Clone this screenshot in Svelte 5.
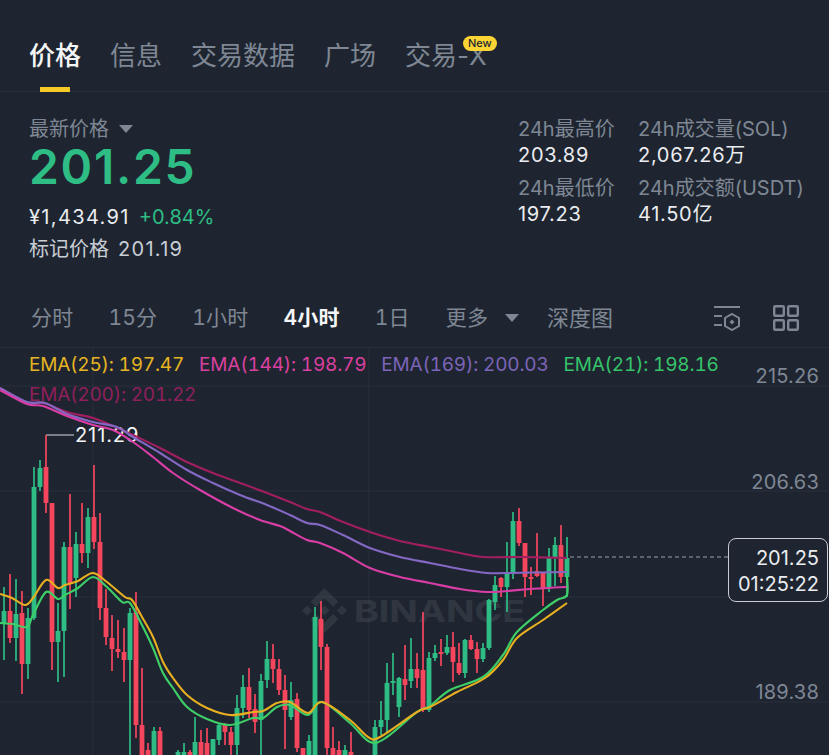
<script lang="ts">
	const tabs = ['价格', '信息', '交易数据', '广场', '交易-X'];
	const intervals = ['分时', '15分', '1小时', '4小时', '1日'];

	const legend = [
		{ text: 'EMA(25): 197.47', color: '#e6b422' },
		{ text: 'EMA(144): 198.79', color: '#d9409f' },
		{ text: 'EMA(169): 200.03', color: '#7c64b8' },
		{ text: 'EMA(21): 198.16', color: '#35c46a' },
		{ text: 'EMA(200): 201.22', color: '#8f1f5c' }
	];

	const axis = [
		{ text: '215.26', y: 375 },
		{ text: '206.63', y: 481 },
		{ text: '189.38', y: 691 }
	];

	const gridY = [386, 491, 597, 702];
	const gridX = [93, 369];

	// x, high, body top, body bottom, low, up?
	type Candle = [number, number, number, number, number, boolean];
	const B = 760;
	const candles: Candle[] = [
		[4, 587, 611, 623, 660, true],
		[10, 574, 611, 638, 643, false],
		[16, 579, 614, 638, 661, true],
		[22, 591, 613, 664, 694, false],
		[28, 608, 618, 664, 679, true],
		[34, 467, 487, 618, 620, true],
		[40, 460, 468, 487, 491, true],
		[46, 435, 467, 503, 513, false],
		[52, 503, 503, 642, 670, false],
		[58, 603, 631, 642, 682, true],
		[64, 542, 547, 631, 677, true],
		[70, 494, 547, 583, 609, false],
		[76, 532, 544, 578, 597, true],
		[82, 503, 544, 553, 563, false],
		[88, 508, 517, 553, 568, true],
		[94, 465, 517, 542, 549, false],
		[100, 513, 542, 608, 620, false],
		[106, 589, 608, 637, 645, false],
		[112, 615, 638, 649, 671, false],
		[118, 620, 649, 652, 658, false],
		[124, 628, 652, 660, 682, false],
		[130, 608, 613, 660, B, true],
		[136, 592, 612, 725, 738, false],
		[142, 668, 725, B, B, false],
		[148, 743, 750, B, B, false],
		[154, 727, 731, B, B, true],
		[160, 727, 731, B, B, false],
		[178, 750, 752, B, B, true],
		[184, 743, 752, B, B, true],
		[190, 750, 752, B, B, false],
		[195, 717, 742, B, B, true],
		[201, 730, 742, B, B, false],
		[207, 728, 743, B, B, false],
		[213, 739, 739, B, B, true],
		[219, 723, 725, 740, 745, true],
		[225, 723, 725, 732, 745, false],
		[231, 727, 732, 745, B, false],
		[237, 695, 708, 745, B, true],
		[243, 675, 687, 708, 718, true],
		[249, 668, 687, 710, 718, false],
		[255, 694, 709, 722, 733, false],
		[261, 674, 681, 720, B, true],
		[267, 641, 659, 680, 688, true],
		[273, 644, 659, 669, 683, false],
		[279, 659, 669, 690, 695, false],
		[285, 675, 690, 710, 749, false],
		[291, 682, 700, 717, 720, true],
		[297, 693, 699, 748, 752, false],
		[303, 748, 748, B, B, false],
		[309, 735, 741, B, B, true],
		[315, 607, 617, B, B, true],
		[321, 601, 619, 647, 670, false],
		[327, 644, 647, 748, B, false],
		[333, 727, 748, B, B, false],
		[339, 741, 750, B, B, false],
		[345, 745, 750, B, B, true],
		[351, 732, 752, B, B, false],
		[375, 720, 727, B, B, true],
		[381, 701, 720, 727, 735, true],
		[387, 663, 683, 720, 733, true],
		[393, 653, 681, 683, 695, true],
		[399, 677, 678, 707, 717, true],
		[405, 645, 679, 685, 700, false],
		[411, 638, 669, 681, 688, true],
		[417, 653, 669, 678, 688, false],
		[423, 612, 670, 710, 712, false],
		[429, 652, 658, 710, 712, true],
		[435, 645, 653, 658, 661, true],
		[441, 639, 652, 654, 666, false],
		[447, 635, 647, 653, 655, true],
		[453, 632, 647, 662, 682, false],
		[459, 643, 663, 673, 675, false],
		[465, 639, 640, 673, 678, true],
		[471, 635, 640, 649, 650, false],
		[477, 642, 649, 659, 673, false],
		[483, 643, 648, 659, 662, true],
		[489, 599, 600, 648, 650, true],
		[495, 576, 585, 602, 610, true],
		[501, 577, 578, 587, 597, false],
		[507, 542, 574, 587, 612, true],
		[513, 512, 521, 574, 579, true],
		[519, 508, 521, 543, 546, false],
		[525, 543, 543, 577, 597, false],
		[531, 567, 577, 579, 595, false],
		[537, 533, 571, 576, 577, false],
		[543, 572, 572, 588, 606, false],
		[549, 548, 558, 588, 592, true],
		[555, 537, 545, 558, 586, true],
		[561, 525, 545, 577, 583, false],
		[567, 537, 558, 577, 597, true]
	];

	const ema200 = [[0,388],[27,403],[43,403],[67,412],[93,418],[113,426],[133,435],[160,448],[187,462],[213,473],[240,483],[267,493],[290,502],[307,509],[320,512],[343,522],[370,532],[400,541],[430,547],[460,553],[483,557],[523,557],[567,558]];
	const ema169 = [[0,388],[27,402],[45,403],[67,414],[93,422],[117,427],[133,437],[160,453],[187,470],[213,483],[240,495],[267,505],[290,515],[307,523],[320,525],[343,535],[370,548],[400,557],[430,563],[460,569],[487,573],[507,573],[567,572]];
	const ema144 = [[0,390],[27,404],[43,406],[67,416],[93,425],[113,430],[133,442],[153,457],[173,473],[200,490],[233,508],[260,520],[280,526],[290,531],[307,540],[320,543],[343,553],[370,568],[400,577],[430,583],[460,589],[487,592],[507,591],[530,589],[567,587]];
	const ema25 = [[0,594],[12,598],[25,605],[33,598],[46,580],[58,588],[65,585],[78,581],[93,573],[107,582],[125,597],[132,600],[142,617],[153,637],[163,662],[173,678],[187,695],[207,708],[230,715],[253,712],[263,711],[277,703],[290,702],[308,713],[322,702],[350,720],[368,737],[380,737],[417,712],[430,707],[457,692],[485,678],[503,660],[517,638],[543,620],[567,603]];
	const ema21 = [[0,623],[13,624],[27,627],[33,615],[46,592],[58,599],[65,595],[78,588],[93,577],[107,587],[122,602],[130,603],[142,625],[153,648],[163,673],[173,688],[187,707],[207,719],[230,725],[253,718],[263,718],[277,707],[290,705],[308,715],[322,702],[350,723],[370,742],[387,737],[417,712],[430,706],[450,690],[483,677],[503,655],[517,632],[543,610],[557,600],[567,595],[567,576]];

	const lines = [
		{ pts: ema200, color: '#a11e60' },
		{ pts: ema169, color: '#8468c4' },
		{ pts: ema144, color: '#d93ea6' },
		{ pts: ema21, color: '#3ecf68' },
		{ pts: ema25, color: '#e8b021' }
	];

	function smooth(pts: number[][]): string {
		let d = `M${pts[0][0]} ${pts[0][1]}`;
		for (let i = 0; i < pts.length - 1; i++) {
			const p0 = pts[i - 1] ?? pts[i];
			const p1 = pts[i];
			const p2 = pts[i + 1];
			const p3 = pts[i + 2] ?? p2;
			const c1x = p1[0] + (p2[0] - p0[0]) / 6;
			const c1y = p1[1] + (p2[1] - p0[1]) / 6;
			const c2x = p2[0] - (p3[0] - p1[0]) / 6;
			const c2y = p2[1] - (p3[1] - p1[1]) / 6;
			d += `C${c1x.toFixed(1)} ${c1y.toFixed(1)} ${c2x.toFixed(1)} ${c2y.toFixed(1)} ${p2[0]} ${p2[1]}`;
		}
		return d;
	}
</script>

<div class="page">
	<nav class="tabs">
		{#each tabs as tab, i}
			<div class="tab" class:active={i === 0}>
				{tab}
				{#if i === tabs.length - 1}<span class="badge">New</span>{/if}
			</div>
		{/each}
	</nav>

	<section class="quote">
		<div class="main">
			<div class="label">最新价格<span class="caret"></span></div>
			<div class="price">201.25</div>
			<div class="sub"><span class="cny">¥1,434.91</span><span class="pct">+0.84%</span></div>
			<div class="mark"><span>标记价格</span><span class="mark-v">201.19</span></div>
		</div>
		<div class="stats">
			<div><div class="stat-k">24h最高价</div><div class="stat-v">203.89</div></div>
			<div><div class="stat-k">24h成交量(SOL)</div><div class="stat-v">2,067.26万</div></div>
			<div><div class="stat-k">24h最低价</div><div class="stat-v">197.23</div></div>
			<div><div class="stat-k">24h成交额(USDT)</div><div class="stat-v">41.50亿</div></div>
		</div>
	</section>

	<div class="toolbar">
		{#each intervals as it}
			<span class="interval" class:current={it === '4小时'}>{it}</span>
		{/each}
		<span class="interval more">更多<span class="caret"></span></span>
		<span class="interval depth">深度图</span>
		<div class="tools">
			<svg width="28" height="26" viewBox="0 0 28 26" fill="none" stroke="#7f8794" stroke-width="2">
				<path d="M1 2H27M1 11H9M1 20H9" />
				<path d="M19 9L26 13V21L19 25L12 21V13Z" />
				<path d="M19 14.5L21.5 17L19 19.5L16.5 17Z" fill="#7f8794" stroke="none" />
			</svg>
			<svg width="26" height="26" viewBox="0 0 26 26" fill="none" stroke="#7f8794" stroke-width="2.4">
				<rect x="1.2" y="1.2" width="9.6" height="9.6" rx="1" />
				<rect x="15.2" y="1.2" width="9.6" height="9.6" rx="1" />
				<rect x="1.2" y="15.2" width="9.6" height="9.6" rx="1" />
				<rect x="15.2" y="15.2" width="9.6" height="9.6" rx="1" />
			</svg>
		</div>
	</div>

	<div class="chart">
		<svg class="plot" width="829" height="408" viewBox="0 347 829 408">
			{#each gridY as y}
				<line x1="0" x2="829" y1={y} y2={y} stroke="#2a303b" stroke-width="1" />
			{/each}
			{#each gridX as x}
				<line x1={x} x2={x} y1="347" y2="755" stroke="#2a303b" stroke-width="1" />
			{/each}

			<g opacity="0.08" fill="#fff">
				<path
					transform="translate(302 588) scale(1.875)"
					d="M16.624 13.9202l2.7175 2.7154-7.353 7.353-7.353-7.352 2.7175-2.7164 4.6355 4.6595 4.6356-4.6595zm4.6366-4.6366L24 12l-2.7154 2.7164L18.5682 12l2.6924-2.7164zm-9.272.001l2.7163 2.6914-2.7164 2.7174v-.001L9.2721 12l2.7164-2.7154zm-9.2722-.001L5.4088 12l-2.6914 2.6924L0 12l2.7164-2.7164zM11.9885.0115l7.353 7.329-2.7174 2.7154-4.6356-4.6356-4.6355 4.6595-2.7174-2.7154 7.353-7.353z"
				/>
				<text class="wm" x="354" y="622" textLength="171" lengthAdjust="spacingAndGlyphs">BINANCE</text>
			</g>

			<line x1="46" x2="74" y1="435" y2="435" stroke="#d8dbe0" stroke-width="1" />
			<text class="high" x="75" y="442">211.29</text>

			{#each candles as [x, high, top, bottom, low, up]}
				<line x1={x} x2={x} y1={high} y2={low} stroke={up ? '#2ebd85' : '#f6465d'} stroke-width="1.7" />
				<rect x={x - 2.4} y={top} width="4.8" height={Math.max(bottom - top, 1.5)} fill={up ? '#2ebd85' : '#f6465d'} />
			{/each}

			{#each lines as l}
				<path d={smooth(l.pts)} fill="none" stroke={l.color} stroke-width="2.1" stroke-linejoin="round" />
			{/each}

			<line x1="570" x2="728" y1="557" y2="557" stroke="#9aa0a8" stroke-width="1" stroke-dasharray="4 3" />
		</svg>

		<div class="legend">
			{#each legend as item}
				<span style="color: {item.color}">{item.text}</span>
			{/each}
		</div>

		{#each axis as a}
			<span class="axis" style="top: {a.y - 347 - 12}px">{a.text}</span>
		{/each}

		<div class="last">
			<div>201.25</div>
			<div>01:25:22</div>
		</div>
	</div>
</div>

<style>
	:global(body) {
		margin: 0;
		background: #1e2530;
	}

	.page {
		width: 829px;
		height: 755px;
		overflow: hidden;
		background: #1e2530;
		color: #eaecef;
		font-family: Inter, 'Noto Sans CJK SC', sans-serif;
	}

	.tabs {
		display: flex;
		gap: 29px;
		height: 91px;
		padding: 0 29px;
		border-bottom: 1px solid #2a303b;
		box-sizing: content-box;
	}

	.tab {
		position: relative;
		font-size: 26px;
		line-height: 36px;
		padding-top: 38px;
		color: #7f8794;
		white-space: nowrap;
	}

	.tab.active {
		color: #f4f5f6;
		font-weight: 500;
	}

	.tab.active::after {
		content: '';
		position: absolute;
		left: 11px;
		right: 11px;
		bottom: -1px;
		height: 5px;
		background: #f5c926;
	}

	.badge {
		position: absolute;
		right: -10px;
		top: 36px;
		width: 34px;
		height: 15px;
		border-radius: 8px;
		background: #fcd535;
		color: #1e2530;
		font-size: 11px;
		line-height: 15px;
		text-align: center;
		font-weight: 500;
	}

	.quote {
		display: flex;
		justify-content: space-between;
		padding: 24px 0 0 29px;
		height: 146px;
	}

	.label {
		display: flex;
		align-items: center;
		font-size: 20px;
		line-height: 26px;
		color: #7f8794;
	}

	.caret {
		display: inline-block;
		width: 0;
		height: 0;
		margin-left: 10px;
		border-left: 7px solid transparent;
		border-right: 7px solid transparent;
		border-top: 8px solid #7f8794;
	}

	.price {
		font-size: 48px;
		font-weight: 600;
		line-height: 50px;
		letter-spacing: 1.7px;
		color: #2ebd85;
	}

	.sub {
		display: flex;
		gap: 9px;
		margin-top: 12px;
		font-size: 20px;
		line-height: 26px;
	}

	.cny {
		letter-spacing: 1.35px;
	}

	.pct {
		color: #2ebd85;
	}

	.mark {
		display: flex;
		gap: 9px;
		margin-top: 6px;
		font-size: 20px;
		line-height: 26px;
		color: #c9ced6;
	}

	.mark-v {
		letter-spacing: 1.3px;
	}

	.stats {
		display: grid;
		grid-template-columns: 120px 191px;
		row-gap: 7px;
		align-content: start;
	}

	.stat-k {
		font-size: 20px;
		line-height: 26px;
		color: #7f8794;
		white-space: nowrap;
	}

	.stat-v {
		font-size: 20px;
		line-height: 26px;
		letter-spacing: 0.7px;
		color: #eaecef;
		white-space: nowrap;
	}

	.toolbar {
		display: flex;
		align-items: center;
		gap: 35px;
		height: 40px;
		margin-top: 36px;
		margin-bottom: 9px;
		padding-left: 31px;
	}

	.interval {
		font-size: 21px;
		line-height: 40px;
		letter-spacing: 0.2px;
		font-variant-numeric: tabular-nums;
		color: #7f8794;
		white-space: nowrap;
	}

	.interval.current {
		color: #f4f5f6;
		font-weight: 600;
	}

	.more {
		display: inline-flex;
		align-items: center;
		margin-left: 1px;
	}

	.more .caret {
		margin-left: 17px;
	}

	.depth {
		margin-left: -7px;
		font-size: 22px;
		letter-spacing: 0;
	}

	.tools {
		display: flex;
		align-items: center;
		gap: 32px;
		margin-left: auto;
		padding-right: 30px;
	}

	.chart {
		position: relative;
		height: 408px;
		border-top: 1px solid #2a303b;
		box-sizing: border-box;
	}

	.plot {
		position: absolute;
		left: 0;
		top: -1px;
		display: block;
	}

	.wm {
		font-family: Inter, sans-serif;
		font-size: 30px;
		font-weight: 700;
	}

	.high {
		font-family: Inter, sans-serif;
		font-size: 20px;
		letter-spacing: 0.9px;
		fill: #f4f5f6;
	}

	.legend {
		position: absolute;
		left: 29px;
		top: 2px;
		display: flex;
		flex-wrap: wrap;
		column-gap: 15px;
		width: 730px;
		font-size: 19px;
		line-height: 30px;
		letter-spacing: -0.2px;
		font-variant-numeric: tabular-nums;
		white-space: nowrap;
	}

	.axis {
		position: absolute;
		right: 10px;
		font-size: 20px;
		line-height: 24px;
		letter-spacing: 0.2px;
		color: #7f8794;
	}

	.last {
		position: absolute;
		left: 728px;
		top: 190px;
		width: 100px;
		height: 64px;
		box-sizing: border-box;
		padding: 6px 8px 0 0;
		border: 1.5px solid #c8ccd2;
		border-radius: 8px;
		background: #1e2530;
		text-align: right;
		font-size: 20px;
		line-height: 26px;
		color: #eaecef;
	}
</style>
